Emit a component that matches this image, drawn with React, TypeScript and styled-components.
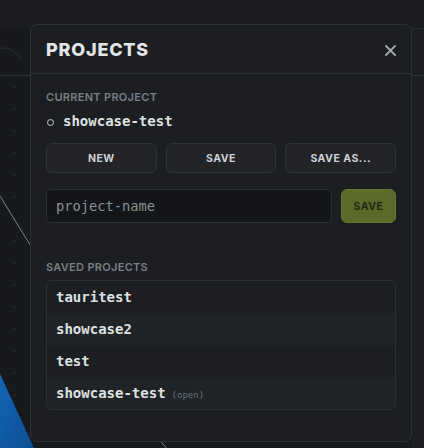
import styled, { createGlobalStyle } from 'styled-components';

const GlobalStyle = createGlobalStyle`
	html, body {
		margin: 0;
		padding: 0;
		background: #17191c;
		font-family: Inter, "Noto Sans", sans-serif;
	}
	* {
		box-sizing: border-box;
	}
`;

const Screen = styled.div`
	position: relative;
	width: 424px;
	height: 448px;
	overflow: hidden;
	padding: 24px 0 0 30px;
`;

const Backdrop = styled.svg`
	position: absolute;
	left: 0;
	top: 0;
	z-index: 0;
`;

const Modal = styled.div`
	position: relative;
	z-index: 1;
	width: 382px;
	height: 418px;
	background: #1c1e21;
	border: 1px solid #2d3034;
	border-radius: 7px;
	display: flex;
	flex-direction: column;
`;

const Header = styled.div`
	height: 49px;
	display: flex;
	align-items: center;
	justify-content: space-between;
	padding: 0 16px 0 15px;
	border-bottom: 1px solid #2d3034;
`;

const Title = styled.h2`
	margin: 0;
	font-size: 18px;
	font-weight: 800;
	letter-spacing: 0.8px;
	color: #e4e5e7;
`;

const CloseButton = styled.button`
	background: none;
	border: none;
	padding: 0;
	width: 14px;
	height: 14px;
	display: flex;
	align-items: center;
	justify-content: center;
	cursor: pointer;
	margin-top: 2px;
	margin-right: -2px;
`;

const Body = styled.div`
	padding: 16px 15px 0 15px;
	display: flex;
	flex-direction: column;
`;

const SectionLabel = styled.div<{ gap?: number }>`
	font-size: 11px;
	line-height: 14px;
	font-weight: 600;
	letter-spacing: 0.3px;
	text-transform: uppercase;
	color: #7b7f85;
	margin-top: ${({ gap }) => gap ?? 0}px;
`;

const CurrentRow = styled.div`
	display: flex;
	align-items: center;
	gap: 9px;
	height: 20px;
	margin-top: 7px;
	padding-left: 1px;
`;

const Ring = styled.span`
	width: 7px;
	height: 7px;
	border: 1px solid #c9cbce;
	border-radius: 50%;
	margin-top: 2px;
`;

const MonoName = styled.span`
	font-family: "DejaVu Sans Mono", "Liberation Mono", monospace;
	font-weight: 700;
	font-size: 14px;
	color: #dfe0e2;
`;

const ButtonRow = styled.div`
	display: grid;
	grid-template-columns: repeat(3, 1fr);
	gap: 9px;
	margin-top: 12px;
`;

const GhostButton = styled.button`
	height: 30px;
	background: #222428;
	border: 1px solid #2f3236;
	border-radius: 6px;
	color: #cfd1d4;
	font-family: Inter, sans-serif;
	font-size: 10.5px;
	font-weight: 700;
	letter-spacing: 0.5px;
	cursor: pointer;
`;

const InputRow = styled.div`
	display: flex;
	gap: 9px;
	margin-top: 16px;
`;

const NameInput = styled.input`
	flex: 1;
	height: 34px;
	background: #131518;
	border: 1px solid #2c2f33;
	border-radius: 5px;
	padding: 0 9px;
	font-family: "DejaVu Sans Mono", "Liberation Mono", monospace;
	font-size: 13.7px;
	color: #d0d2d5;
	outline: none;
	&::placeholder {
		color: #8d9095;
	}
`;

const SaveButton = styled.button`
	width: 55px;
	height: 34px;
	background: #5a6a2b;
	border: 1px solid #66772f;
	border-radius: 6px;
	color: #23290f;
	font-family: Inter, sans-serif;
	font-size: 10.5px;
	font-weight: 700;
	letter-spacing: 0.5px;
	cursor: pointer;
`;

const List = styled.div`
	margin-top: 6px;
	border: 1px solid #2c2f33;
	border-radius: 6px;
	overflow: hidden;
`;

const ListItem = styled.div<{ alt?: boolean }>`
	height: 32px;
	display: flex;
	align-items: center;
	gap: 6px;
	padding: 0 9px;
	background: ${({ alt }) => (alt ? '#212427' : '#1c1e21')};
`;

const OpenTag = styled.span`
	font-family: "DejaVu Sans Mono", "Liberation Mono", monospace;
	font-size: 9px;
	color: #6c7075;
	margin-top: 3px;
`;

const saved = ['tauritest', 'showcase2', 'test', 'showcase-test'];
const current = 'showcase-test';

const dots = Array.from({ length: 15 }, (_, i) => 87 + i * 22);

const App = () => (
	<>
		<GlobalStyle />
		<Screen>
			<Backdrop width={424} height={448} viewBox="0 0 424 448">
				<rect x={0} y={0} width={424} height={448} fill="#17191c" />
				<rect x={0} y={0} width={424} height={28} fill="#1a1c1f" />
				<rect x={412} y={28} width={12} height={420} fill="#1c1e21" />
				<line x1={412} y1={28.5} x2={424} y2={28.5} stroke="#2a2d31" />
				<line x1={0} y1={75.5} x2={424} y2={75.5} stroke="#2e3135" />
				<path d="M0 48 Q14 47 20 58" fill="none" stroke="#2c2f33" strokeWidth={1} />
				{dots.map((y) => (
					<circle key={y} cx={14} cy={y} r={1} fill="#2b2e32" />
				))}
				<line x1={0} y1={196} x2={32} y2={248} stroke="#7e8186" strokeWidth={1} />
				<line x1={158} y1={438} x2={168} y2={450} stroke="#7e8186" strokeWidth={1} />
				<defs>
					<linearGradient id="node" x1="0" y1="0" x2="1" y2="1">
						<stop offset="0" stopColor="#1465b6" />
						<stop offset="1" stopColor="#0b4f92" />
					</linearGradient>
				</defs>
				<path d="M0 374 L12 400 L34 448 L0 448 Z" fill="url(#node)" />
			</Backdrop>
			<Modal>
				<Header>
					<Title>PROJECTS</Title>
					<CloseButton aria-label="Close">
						<svg width={11} height={11} viewBox="0 0 11 11">
							<path d="M1 1 L10 10 M10 1 L1 10" stroke="#a3a6ab" strokeWidth={1.8} strokeLinecap="round" />
						</svg>
					</CloseButton>
				</Header>
				<Body>
					<SectionLabel>Current Project</SectionLabel>
					<CurrentRow>
						<Ring />
						<MonoName>{current}</MonoName>
					</CurrentRow>
					<ButtonRow>
						<GhostButton>NEW</GhostButton>
						<GhostButton>SAVE</GhostButton>
						<GhostButton>SAVE AS...</GhostButton>
					</ButtonRow>
					<InputRow>
						<NameInput placeholder="project-name" />
						<SaveButton>SAVE</SaveButton>
					</InputRow>
					<SectionLabel gap={37}>Saved Projects</SectionLabel>
					<List>
						{saved.map((name, i) => (
							<ListItem key={name} alt={i % 2 === 1}>
								<MonoName>{name}</MonoName>
								{name === current && <OpenTag>(open)</OpenTag>}
							</ListItem>
						))}
					</List>
				</Body>
			</Modal>
		</Screen>
	</>
);

export default App;
